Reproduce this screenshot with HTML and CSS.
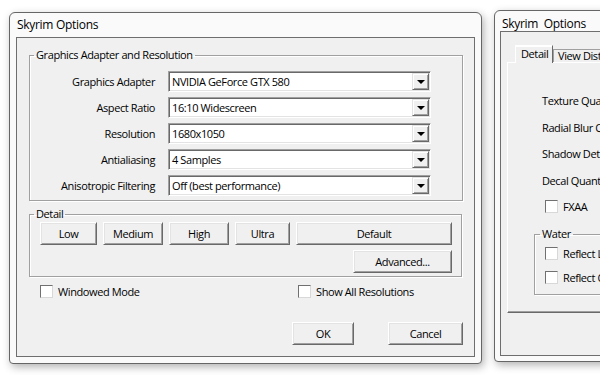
FILE: index.html
```html
<!DOCTYPE html>
<html>
<head>
<meta charset="utf-8">
<link rel="stylesheet" href="styles.css">
</head>
<body>
<div class="desk">
  <div class="win win-main">
    <div class="title">Skyrim Options</div>
    <div class="client">
      <fieldset class="group g1">
        <legend>Graphics Adapter and Resolution</legend>
        <div class="form">
          <label>Graphics Adapter</label>
          <div class="combo"><span>NVIDIA GeForce GTX 580</span><i class="drop"></i></div>
          <label>Aspect Ratio</label>
          <div class="combo"><span>16:10 Widescreen</span><i class="drop"></i></div>
          <label>Resolution</label>
          <div class="combo"><span>1680x1050</span><i class="drop"></i></div>
          <label>Antialiasing</label>
          <div class="combo"><span>4 Samples</span><i class="drop"></i></div>
          <label>Anisotropic Filtering</label>
          <div class="combo"><span>Off (best performance)</span><i class="drop"></i></div>
        </div>
      </fieldset>
      <fieldset class="group g2">
        <legend>Detail</legend>
        <div class="presets">
          <button class="btn w-low">Low</button>
          <button class="btn w-med">Medium</button>
          <button class="btn w-high">High</button>
          <button class="btn w-ultra">Ultra</button>
          <button class="btn w-def">Default</button>
        </div>
        <div class="adv-row">
          <button class="btn w-adv">Advanced...</button>
        </div>
      </fieldset>
      <div class="checks">
        <label class="check c-win"><i class="cb"></i><span>Windowed Mode</span></label>
        <label class="check c-all"><i class="cb"></i><span>Show All Resolutions</span></label>
      </div>
      <div class="actions">
        <button class="btn w-ok">OK</button>
        <button class="btn w-cancel">Cancel</button>
      </div>
    </div>
  </div>

  <div class="win win-back">
    <div class="title title-back">Skyrim&nbsp; Options</div>
    <div class="client client-back">
      <div class="tabs">
        <div class="tab tab-on">Detail</div>
        <div class="tab">View Distance</div>
      </div>
      <div class="panel">
        <div class="rlabels">
          <div class="rl">Texture Quality</div>
          <div class="rl">Radial Blur Quality</div>
          <div class="rl">Shadow Detail</div>
          <div class="rl">Decal Quantity</div>
        </div>
        <label class="check c-fxaa"><i class="cb"></i><span>FXAA</span></label>
        <fieldset class="group water">
          <legend>Water</legend>
          <label class="check c-ref c-ref1"><i class="cb"></i><span>Reflect Land</span></label>
          <label class="check c-ref"><i class="cb"></i><span>Reflect Objects</span></label>
        </fieldset>
      </div>
    </div>
  </div>
</div>
</body>
</html>
```
FILE: styles.css
```css
html, body {
  margin: 0;
  padding: 0;
}
body {
  width: 600px;
  height: 375px;
  overflow: hidden;
  background: #ffffff;
  font-family: "Open Sans", "Noto Sans", sans-serif;
  font-size: 11px;
  letter-spacing: -0.4px;
  color: #000;
}
.desk {
  display: flex;
  align-items: flex-start;
  padding-left: 9px;
  gap: 12px;
}
.win {
  box-sizing: border-box;
  flex: none;
  border: 1px solid #666;
  background: #fafafa;
  border-radius: 6px 6px 4px 4px;
  box-shadow: 2px 3px 8px rgba(0, 0, 0, 0.3);
  display: flex;
  flex-direction: column;
}
.win-main {
  width: 473px;
  height: 352px;
  margin-top: 12px;
  padding: 0 6px 6px 6px;
}
.title {
  height: 24px;
  line-height: 24px;
  padding-left: 1px;
  font-size: 12px;
  letter-spacing: -0.3px;
  white-space: nowrap;
}
.client {
  flex: 1;
  border: 1px solid #6e6e6e;
  background: #f0f0f0;
  display: flex;
  flex-direction: column;
}

/* group boxes */
.group {
  margin: 0;
  padding: 0;
  min-width: 0;
  border: 1px solid #a0a0a0;
  box-shadow: inset 1px 1px 0 #fff, 1px 1px 0 #fff;
}
.group legend {
  padding: 0 2px;
  margin-left: 4px;
  line-height: 14px;
  font-size: 11px;
}
.g1 {
  margin: 10px 0 0 12px;
  width: 434px;
  box-sizing: border-box;
  padding: 9px 0 4px 0;
}
.form {
  display: grid;
  grid-template-columns: 125px 263px;
  grid-auto-rows: 21px;
  column-gap: 13px;
  row-gap: 5px;
  align-items: center;
}
.form label {
  text-align: right;
  white-space: nowrap;
}
.combo {
  box-sizing: border-box;
  height: 21px;
  width: 263px;
  background: #fff;
  border: 1px solid;
  border-color: #a0a0a0 #fff #fff #a0a0a0;
  box-shadow: inset 1px 1px 0 #696969, inset -1px -1px 0 #e3e3e3;
  display: flex;
  align-items: center;
  padding: 1px 1px 1px 3px;
}
.combo span {
  flex: 1;
  white-space: nowrap;
}
.drop {
  box-sizing: border-box;
  width: 17px;
  height: 17px;
  background: #f0f0f0;
  border: 1px solid;
  border-color: #e3e3e3 #696969 #696969 #e3e3e3;
  box-shadow: inset 1px 1px 0 #fff, inset -1px -1px 0 #a0a0a0;
  display: flex;
  align-items: center;
  justify-content: center;
}
.drop::after {
  content: "";
  width: 0;
  height: 0;
  border-left: 4px solid transparent;
  border-right: 4px solid transparent;
  border-top: 4px solid #000;
  margin-top: 1px;
}

/* buttons */
.btn {
  box-sizing: border-box;
  height: 23px;
  margin: 0;
  padding: 0;
  font: inherit;
  letter-spacing: inherit;
  color: #000;
  background: #f0f0f0;
  border: 1px solid;
  border-color: #fff #696969 #696969 #fff;
  box-shadow: inset 1px 1px 0 #e3e3e3, inset -1px -1px 0 #a0a0a0;
}
.g2 {
  margin: 6px 0 0 12px;
  width: 433px;
  box-sizing: border-box;
  padding: 1px 0 3px 0;
}
.presets {
  display: flex;
  gap: 6px;
  padding-left: 10px;
}
.w-low { width: 57px; }
.w-med { width: 60px; }
.w-high { width: 60px; }
.w-ultra { width: 55px; }
.w-def { width: 156px; }
.adv-row {
  display: flex;
  justify-content: flex-end;
  margin-top: 5px;
  padding-right: 9px;
}
.w-adv { width: 99px; }

/* checkboxes */
.check {
  display: flex;
  align-items: center;
  white-space: nowrap;
  height: 13px;
}
.cb {
  box-sizing: border-box;
  flex: none;
  width: 13px;
  height: 13px;
  background: #fff;
  border: 1px solid;
  border-color: #707070 #d8d8d8 #d8d8d8 #707070;
  margin-right: 5px;
}
.checks {
  display: flex;
  margin-top: 8px;
  padding-left: 23px;
}
.c-win { width: 258px; }
.actions {
  display: flex;
  justify-content: flex-end;
  gap: 34px;
  margin-top: 24px;
  padding-right: 11px;
}
.w-ok { width: 62px; }
.w-cancel { width: 75px; }

/* background window */
.win-back {
  width: 200px;
  height: 352px;
  margin-top: 10px;
  padding: 0 5px 5px 5px;
}
.title-back {
  height: 20px;
  line-height: 25px;
  padding-left: 2px;
}
.client-back {
  border-color: #6e6e6e;
}
.tabs {
  display: flex;
  align-items: flex-end;
  margin: 13px 0 0 14px;
  height: 17px;
  position: relative;
  z-index: 1;
}
.tab {
  box-sizing: border-box;
  height: 13px;
  line-height: 12px;
  padding: 0 4px;
  border: 1px solid #a0a0a0;
  border-bottom: none;
  background: #f0f0f0;
  white-space: nowrap;
}
.tab-on {
  height: 18px;
  line-height: 16px;
  width: 38px;
  padding: 0 5px;
  margin-bottom: -1px;
  border-color: #fff #696969 #fff #fff;
  box-shadow: inset 0 1px 0 #fff;
}
.panel {
  margin: 0 0 0 6px;
  height: 251px;
  box-sizing: border-box;
  border: 1px solid;
  border-color: #fff #696969 #696969 #fff;
  box-shadow: inset -1px -1px 0 #a0a0a0;
  border-right: none;
  padding: 31px 0 0 26px;
}
.rlabels {
  display: flex;
  flex-direction: column;
  padding-left: 8px;
}
.rl {
  height: 26.5px;
  line-height: 14px;
  white-space: nowrap;
}
.c-fxaa {
  margin: 0 0 0 11px;
}
.water {
  margin-top: 14px;
  padding: 0 0 10px 0;
  border-right: none;
}
.water legend {
  margin-left: 5px;
}
.c-ref {
  margin-top: 11px;
  margin-left: 10px;
}
.c-ref1 {
  margin-top: 6px;
}
```
